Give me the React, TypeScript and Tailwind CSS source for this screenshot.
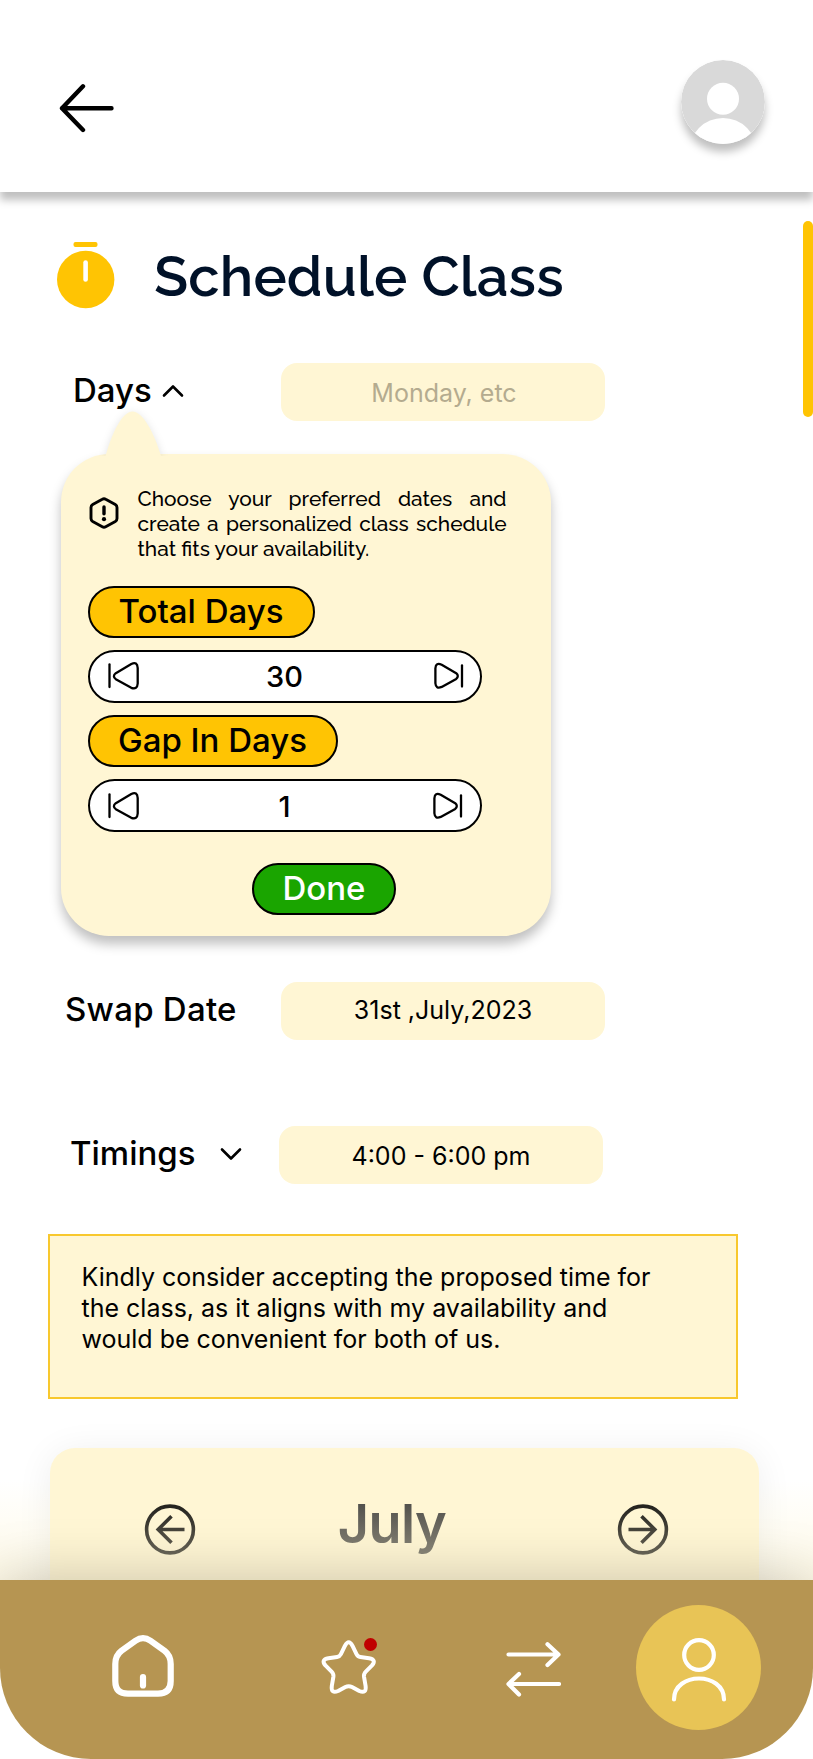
import type { ReactNode } from "react";

function BackArrow() {
  return (
    <svg className="h-[50px] w-[56px]" viewBox="0 0 56 50" fill="none" stroke="#000" strokeWidth="4.4" strokeLinecap="round" strokeLinejoin="round">
      <path d="M52.500 25.300H3M24 3.300 3 25.300l21 21.700" />
    </svg>
  );
}

function Avatar() {
  return (
    <div className="size-[84px] overflow-hidden rounded-full bg-white shadow-[0_8px_8px_rgba(0,0,0,0.25)]">
      <svg className="block size-full" viewBox="0 0 84 84">
        <circle cx="42" cy="42" r="42" fill="#d9d9d9" />
        <circle cx="42" cy="38.7" r="16" fill="#fff" />
        <circle cx="42" cy="92" r="34" fill="#fff" />
      </svg>
    </div>
  );
}

function Stopwatch() {
  return (
    <svg className="h-[67px] w-[58px]" viewBox="0 0 58 67">
      <rect x="16.5" y="0" width="24" height="5" rx="2" fill="#ffc403" />
      <circle cx="28.7" cy="37.5" r="28.7" fill="#ffc403" />
      <path d="M28.6 20.5v17" stroke="#fff" strokeWidth="4.6" strokeLinecap="round" />
    </svg>
  );
}

function Chevron({ up }: { up?: boolean }) {
  return (
    <svg className="h-[14px] w-[22px]" viewBox="0 0 22 14" fill="none" stroke="#000" strokeWidth="2.6" strokeLinecap="round" strokeLinejoin="round">
      <path d={up ? "M2 11.5 11 2.5l9 9" : "M2 2.5l9 9 9-9"} />
    </svg>
  );
}

function InfoHexagon() {
  return (
    <svg className="h-[32px] w-[30px]" viewBox="0 0 30 32" fill="none" stroke="#000" strokeLinecap="round" strokeLinejoin="round">
      <path strokeWidth="2.9" d="M13.3 2.2Q15 1.2 16.7 2.2L26.3 7.4Q28 8.4 28 10.4V21.6Q28 23.6 26.3 24.6L16.7 29.8Q15 30.8 13.3 29.8L3.7 24.6Q2 23.6 2 21.6V10.4Q2 8.4 3.7 7.4Z" />
      <path strokeWidth="3.4" d="M15 10v6.8" />
      <circle cx="15" cy="22.2" r="2.1" fill="#000" stroke="none" />
    </svg>
  );
}

function StepIcon({ next }: { next?: boolean }) {
  return (
    <svg className={next ? "h-[30px] w-[32px] -scale-x-100" : "h-[30px] w-[32px]"} viewBox="0 0 32 30" fill="none" stroke="#000" strokeWidth="2.3" strokeLinecap="round" strokeLinejoin="round">
      <path d={next ? "M2 4.500v21" : "M1.5 3.5v22.500"} />
      <path d={next ? "M7.800 12.200 22.300 3.800Q28.200 1 28.600 7.200V22.200Q28.200 28.400 22.300 25.900L7.800 17.900Q4.600 15 7.800 12.200Z" : "M7.800 12.200 23.300 3Q29.300 .2 29.700 7V22.500Q29.300 29 23.300 26.800L7.800 18.200Q4 15.200 7.800 12.200Z"} />
    </svg>
  );
}

function Pill({ children, className }: { children: ReactNode; className: string }) {
  return (
    <button className={`flex h-[52.5px] items-center justify-center rounded-full border-2 border-black text-[33px] font-medium ${className}`}>
      {children}
    </button>
  );
}

function Stepper({ value }: { value: number }) {
  return (
    <div className="flex h-[52.5px] w-[394px] items-center justify-between rounded-full border-2 border-black bg-white pr-[16px] pl-[18px]">
      <button><StepIcon /></button>
      <span className="pt-[2px] pr-[2px] text-[29px] leading-[44px] font-medium">{value}</span>
      <button><StepIcon next /></button>
    </div>
  );
}

function Field({ children, className = "" }: { children: ReactNode; className?: string }) {
  return (
    <div className={`flex h-[58px] w-[324px] items-center justify-center rounded-2xl bg-[#fff6d4] text-[25px] ${className}`}>
      {children}
    </div>
  );
}

function CircleArrow({ right }: { right?: boolean }) {
  return (
    <svg className={right ? "size-[52px] -scale-x-100" : "size-[52px]"} viewBox="0 0 52 52" fill="none" stroke="#000" strokeWidth="3.6">
      <circle cx="26" cy="25.500" r="23.4" />
      <path d="M40.500 25.500H14M27.500 12.200 14.200 25.500l13.300 13.300" />
    </svg>
  );
}

function SchedulePopover() {
  return (
    <section className="relative mt-[33px] ml-[60.500px] h-[482px] w-[490px] rounded-[48px] bg-[#fff6d4] shadow-[0_8px_12px_rgba(0,0,0,0.25)]">
      <svg className="absolute -top-[43px] left-[37px] h-[45px] w-[70px] drop-shadow-[0_2px_4px_rgba(0,0,0,0.12)] [clip-path:inset(-10px_-10px_0_-10px)]" viewBox="0 0 70 45">
        <path d="M7.500 45C14 22 24 .5 34.500 .5S56 22 63 45Z" fill="#fff6d4" />
      </svg>
      <div className="flex pt-[32px] pl-[28.500px]">
        <span className="mt-[11px]"><InfoHexagon /></span>
        <p className="ml-[18.500px] w-[369px] text-justify font-[Raleway,sans-serif] text-[20.900px] leading-[25px] font-medium">
          Choose your preferred dates and create a personalized class schedule that fits your availability.
        </p>
      </div>
      <div className="mt-[24.500px] ml-[27px] flex flex-col items-start gap-[12.100px]">
        <Pill className="w-[227px] bg-[#ffc403]">Total Days</Pill>
        <Stepper value={30} />
        <Pill className="w-[250px] bg-[#ffc403]">Gap In Days</Pill>
        <Stepper value={1} />
      </div>
      <div className="mt-[31px] ml-[191.500px] flex">
        <Pill className="w-[144px] bg-[#1aa500] text-white">Done</Pill>
      </div>
    </section>
  );
}

function BottomNav() {
  return (
    <nav className="absolute inset-x-0 bottom-0 flex h-[179px] rounded-b-[91px] bg-[#b69552]">
      <svg className="mt-[53px] ml-[111px] size-[66px]" viewBox="0 0 66 66" fill="none" stroke="#fff" strokeWidth="6.200" strokeLinecap="round" strokeLinejoin="round">
        <path d="M24.500 7.800Q32 2.500 39.500 7.800L53.500 17.800Q59.700 22.500 59.700 31V48Q59.700 60.700 47 60.700H17Q4.300 60.700 4.300 48V31Q4.300 22.500 10.500 17.800Z" />
        <path d="M32 44v8.500" />
      </svg>
      <div className="relative mt-[57px] ml-[142px] size-[60px]">
        <svg className="size-full" viewBox="0 0 60 60" fill="none" stroke="#fff" strokeWidth="4" strokeLinejoin="round">
          <path d="M26 8.700Q29.700 1.800 33.400 8.700L37.500 17.200Q38.700 19.600 41.300 20L50 21.200Q57.800 22.600 53 28.400L46.800 34.600Q44.600 36.800 45 39.600L46.600 49Q47.600 57 40.300 54L33 50Q29.700 48.300 26.400 50L19.100 54Q11.800 57 12.800 49L14.400 39.600Q14.800 36.800 12.600 34.600L6.400 28.400Q1.600 22.600 9.400 21.200L18.100 20Q20.700 19.600 21.900 17.200Z" />
        </svg>
        <span className="absolute top-[1px] left-[45px] size-[13px] rounded-full bg-[#c00000]" />
      </div>
      <svg className="mt-[61px] ml-[126px] h-[56px] w-[56px]" viewBox="0 0 56 56" fill="none" stroke="#fff" strokeWidth="4.200" strokeLinecap="round" strokeLinejoin="round">
        <path d="M3.500 13.500h50M42.500 3.300 53.500 13.500 42.500 24M54 43H4M14 33 3.500 43 14 53.500" />
      </svg>
      <div className="mt-[24.500px] ml-[75px] flex size-[125px] justify-center rounded-full bg-[#e8c456]">
        <svg className="mt-[32px] h-[66px] w-[56px]" viewBox="0 0 56 66" fill="none" stroke="#fff" strokeWidth="4.200" strokeLinecap="round">
          <circle cx="28" cy="18" r="14.800" />
          <path d="M3 62.500C3 34.500 53 34.500 53 62.500" />
        </svg>
      </div>
    </nav>
  );
}

export default function App() {
  return (
    <div className="relative h-[1759px] w-[813px] overflow-hidden bg-white font-[Inter,sans-serif] text-black">
      <header className="flex h-[192px] items-start justify-between bg-white pr-[48px] pl-[59px] shadow-[0_8px_8px_rgba(0,0,0,0.25)]">
        <button className="mt-[83px]"><BackArrow /></button>
        <div className="mt-[60px]"><Avatar /></div>
      </header>
      <span className="absolute top-[221px] right-0 h-[196px] w-[10px] rounded-[5px] bg-[#ffc403]" />

      <main>
        <div className="flex h-[119px] pt-[50px] pl-[57px]">
          <Stopwatch />
          <h1 className="ml-[39px] font-[Raleway,sans-serif] text-[56px] leading-[69px] font-semibold tracking-[0.15px] text-[#001128]">Schedule Class</h1>
        </div>

        <div className="mt-[52px] flex h-[58px]">
          <div className="flex w-[281px] pl-[73px]">
            <span className="text-[33px] leading-[54px] font-medium">Days</span>
            <span className="mt-[21px] ml-[10px]"><Chevron up /></span>
          </div>
          <Field className="pt-[3px] pl-[2px] text-[#b4ab8f]">Monday, etc</Field>
        </div>

        <SchedulePopover />

        <div className="mt-[46px] flex h-[58px]">
          <span className="w-[281px] pl-[65px] text-[33px] leading-[55px] font-medium tracking-[0.25px]">Swap Date</span>
          <Field className="pb-px">31st ,July,2023</Field>
        </div>

        <div className="mt-[86px] flex h-[58px]">
          <div className="flex w-[279px] pl-[70px]">
            <span className="text-[33px] leading-[55px] font-medium">Timings</span>
            <span className="mt-[21px] ml-[24px]"><Chevron /></span>
          </div>
          <Field className="pt-[3px]">4:00 - 6:00 pm</Field>
        </div>

        <p className="mt-[50px] ml-[48px] h-[165px] w-[690px] border-2 border-[#f8c82e] bg-[#fff6d4] pt-[25.500px] pr-[70px] pl-[31.500px] text-[25px] leading-[31.400px]">
          Kindly consider accepting the proposed time for the class, as it aligns with my availability and would be convenient for both of us.
        </p>

        <section className="mt-[49px] ml-[50px] flex h-[160px] w-[709px] items-start justify-between rounded-t-[25px] bg-[#fff6d4] pr-[90px] pl-[94px] shadow-[0_4px_36px_rgba(0,0,20,0.07)]">
          <button className="mt-[56px]"><CircleArrow /></button>
          <h2 className="mt-[43px] mr-[29px] text-[54px] leading-[66px] font-semibold tracking-[-0.5px] text-[#383838]">July</h2>
          <button className="mt-[56px]"><CircleArrow right /></button>
        </section>
      </main>

      <div className="pointer-events-none absolute inset-x-0 bottom-[179px] h-[100px] overflow-hidden bg-linear-to-b from-[#fff6d4]/0 to-[#fff6d4]/55">
        <div className="absolute inset-x-0 -bottom-[179px] h-[179px] shadow-[0_0_56px_rgba(0,0,0,0.22)]" />
      </div>
      <BottomNav />
    </div>
  );
}
